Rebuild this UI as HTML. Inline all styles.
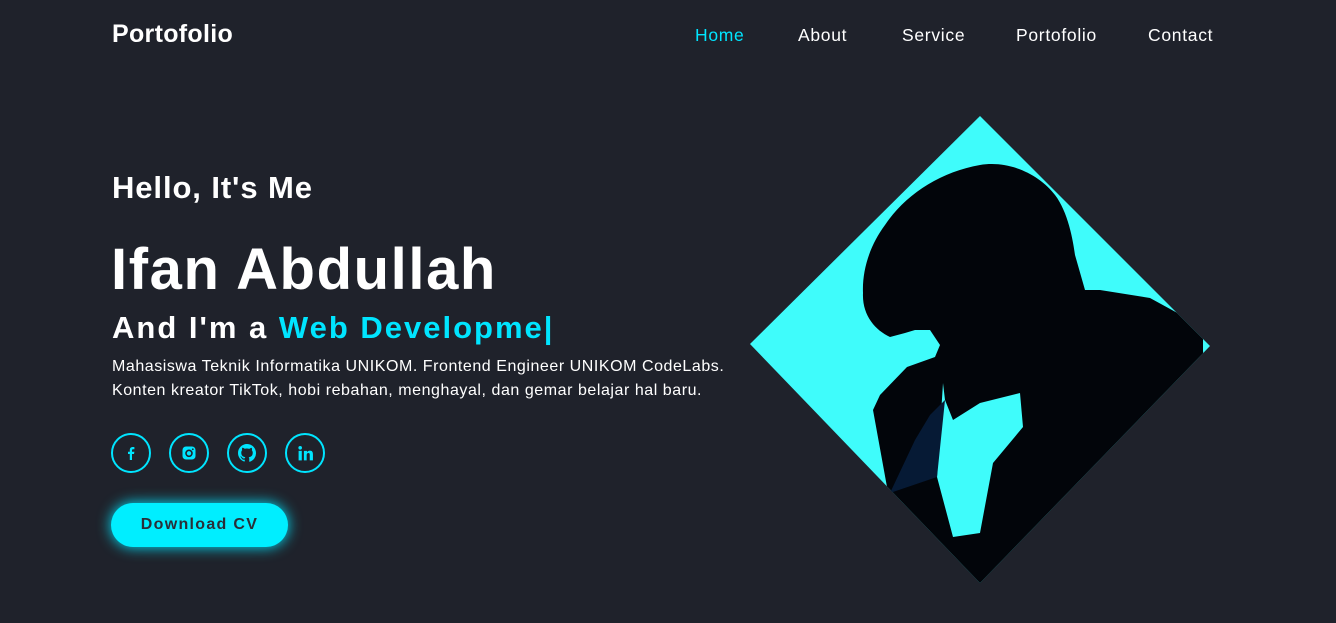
<!DOCTYPE html>
<html><head><meta charset="utf-8"><style>
*{margin:0;padding:0;box-sizing:border-box}
body{width:1336px;height:623px;background:#1f222b;font-family:"Liberation Sans",sans-serif;color:#fff;overflow:hidden;position:relative}
.logo{position:absolute;left:112px;top:20px;font-size:25px;font-weight:bold;letter-spacing:0.3px}
nav a{position:absolute;top:25px;font-size:17.5px;color:#fff;text-decoration:none;letter-spacing:0.7px}
nav a.act{color:#00e5ff}
h3{position:absolute;left:112px;top:170px;font-size:31px;font-weight:bold;letter-spacing:0.9px}
h1{position:absolute;left:111px;top:236px;font-size:58px;font-weight:bold;letter-spacing:1.6px}
h2{position:absolute;left:112px;top:310px;font-size:31px;font-weight:bold;letter-spacing:2px}
h2 span{color:#00e5ff}
p{position:absolute;left:112px;top:355px;font-size:16px;line-height:24px;letter-spacing:0.55px;white-space:nowrap}
.soc{position:absolute;left:111px;top:433px;display:flex;gap:18px}
.soc div{width:40px;height:40px;border:2px solid #00e5ff;border-radius:50%;display:flex;align-items:center;justify-content:center}
.btn{position:absolute;left:111px;top:503px;width:177px;height:44px;border-radius:22px;background:#00eeff;box-shadow:0 0 14px #00e5ff;color:#2a2e38;font-size:16px;font-weight:bold;letter-spacing:1.3px;display:flex;align-items:center;justify-content:center}
svg.d{position:absolute;left:0;top:0}
</style></head><body>
<div class="logo">Portofolio</div>
<nav><a class="act" style="left:695px">Home</a><a style="left:798px">About</a><a style="left:902px">Service</a><a style="left:1016px">Portofolio</a><a style="left:1148px">Contact</a></nav>
<h3>Hello, It's Me</h3>
<h1>Ifan Abdullah</h1>
<h2>And I'm a <span>Web Developme|</span></h2>
<p>Mahasiswa Teknik Informatika UNIKOM. Frontend Engineer UNIKOM CodeLabs.<br>Konten kreator TikTok, hobi rebahan, menghayal, dan gemar belajar hal baru.</p>
<div class="soc">
<div><svg width="16" height="16" viewBox="0 0 16 16"><path d="M9 15V9h2l.4-2.3H9V5.3c0-.7.3-1.1 1.1-1.1h1.3V2.1C11 2 10.4 2 9.8 2 8 2 6.8 3 6.8 5v1.7H5V9h1.8v6z" fill="#00e5ff"/></svg></div>
<div><svg width="16" height="16" viewBox="0 0 16 16"><rect x="1.5" y="1.5" width="13" height="13" rx="3.5" fill="#00e5ff"/><circle cx="8" cy="8.3" r="3" fill="none" stroke="#1f222b" stroke-width="1.6"/><circle cx="11.8" cy="4.3" r="0.9" fill="#1f222b"/></svg></div>
<div><svg width="18" height="18" viewBox="0 0 16 16"><path fill="#00e5ff" d="M8 0C3.58 0 0 3.58 0 8c0 3.54 2.29 6.53 5.47 7.59.4.07.55-.17.55-.38v-1.33c-2.23.48-2.7-1.07-2.7-1.07-.36-.93-.89-1.17-.89-1.17-.73-.5.05-.49.05-.49.8.06 1.23.83 1.23.83.72 1.22 1.87.87 2.33.66.07-.52.28-.87.51-1.07-1.78-.2-3.64-.89-3.64-3.95 0-.87.31-1.59.82-2.15-.08-.2-.36-1.02.08-2.12 0 0 .67-.21 2.2.82A7.6 7.6 0 0 1 8 4.04c.68 0 1.36.09 2 .27 1.53-1.04 2.2-.82 2.2-.82.44 1.1.16 1.92.08 2.12.51.56.82 1.27.82 2.15 0 3.07-1.87 3.75-3.65 3.95.29.25.54.73.54 1.48v2.2c0 .21.15.46.55.38A8 8 0 0 0 16 8c0-4.42-3.58-8-8-8z"/></svg></div>
<div><svg width="17" height="17" viewBox="0 0 16 16"><rect x="1.5" y="5.5" width="3" height="9" fill="#00e5ff"/><circle cx="3" cy="2.6" r="1.7" fill="#00e5ff"/><path d="M6.5 5.5h2.9v1.3C10 5.8 11 5.3 12.2 5.3c2 0 2.8 1.3 2.8 3.5v5.7h-3V9.3c0-1.1-.3-1.8-1.3-1.8-1.1 0-1.6.8-1.6 1.9v5.1h-2.6z" fill="#00e5ff"/></svg></div>
</div>
<div class="btn">Download CV</div>
<svg class="d" width="1336" height="623">
<defs><clipPath id="c"><polygon points="980,116 1210,346 980,583 750,344"/></clipPath></defs>
<polygon points="980,116 1210,346 980,583 750,344" fill="#3ffcfb"/>
<g clip-path="url(#c)">
<path d="M980,165 C1010,160 1040,175 1055,195 C1068,212 1073,240 1075,255 L1085,290 L1100,290 L1150,298 L1203,327 L1203,350 L1215,600 L980,600 L890,493 L887,487 L873,410 L880,395 L907,367 L935,357 L940,345 L930,330 L915,330 L905,333 L890,337 C875,330 862,315 863,293 C862,270 870,245 885,225 C905,195 940,172 980,165 Z" fill="#02050a"/>
<polygon points="937,477 953,537 980,533 993,463 1023,427 1020,393 980,403 953,420 945,400 943,383" fill="#3ffcfb"/>
<polygon points="937,477 945,400 930,415 915,440 890,493" fill="#061a35"/>
</g>
</svg>
</body></html>
